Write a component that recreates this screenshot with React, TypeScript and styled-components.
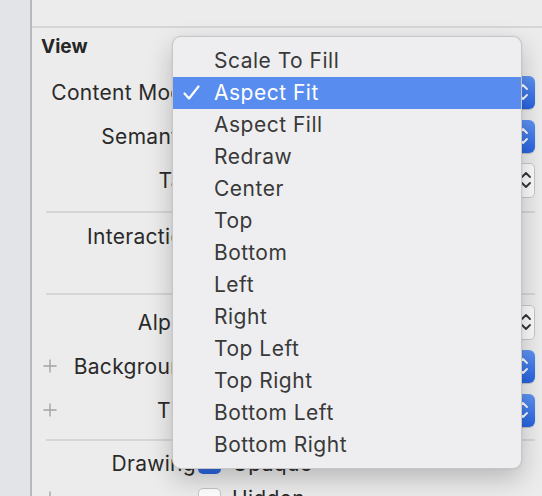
import { createGlobalStyle } from 'styled-components';
import styled from 'styled-components';

const GlobalStyle = createGlobalStyle`
  html, body {
    margin:0;
    padding:0;
    background:#ececec;
    font-family:Inter, "Noto Sans", "DejaVu Sans", sans-serif;
    -webkit-font-smoothing:antialiased;
  }
`

const Page = styled.div`
  display:flex;
  width:542px;
  height:496px;
  overflow:hidden;
  position:relative;
  background:#ececec;
`
const Sidebar = styled.div`
  width:30px;
  flex-shrink:0;
  background:#e3e4e8;
  border-right:2px solid #b9b9bb;
`
const Inspector = styled.div`
  flex:1;
  display:flex;
  flex-direction:column;
`
const TopBar = styled.div`
  height:26px;
  flex-shrink:0;
  border-bottom:2px solid #d6d6d6;
`
const Section = styled.div`
  display:flex;
  flex-direction:column;
  flex-shrink:0;
  padding:0 7px 0 9px;
`
const Title = styled.div`
  height:42px;
  flex-shrink:0;
  box-sizing:border-box;
  padding-top:8px;
  line-height:22px;
  font-size:19px;
  font-weight:700;
  color:#262626;
`
const Row = styled.div<{ $h: number }>`
  display:grid;
  grid-template-columns:155px 1fr;
  column-gap:2px;
  align-items:center;
  flex-shrink:0;
  height:${p => p.$h}px;
`
const LabelCell = styled.div`
  display:flex;
  align-items:center;
  height:100%;
`
const Label = styled.span`
  margin-left:auto;
  font-size:21px;
  letter-spacing:0.3px;
  color:#2a2a2a;
  white-space:nowrap;
`
const Divider = styled.div<{ $mt: number }>`
  height:2px;
  flex-shrink:0;
  background:#d6d6d6;
  margin:${p => p.$mt}px 0 5px 5px;
`
const PopupButton = styled.div`
  display:flex;
  align-items:center;
  height:33px;
  border-radius:6px;
  background:linear-gradient(#5f93f2, #2762df);
  box-shadow:0 1px 1px rgba(0,0,0,0.2);
  color:#fff;
  font-size:20px;
  padding:0 6px 0 10px;
`
const PopupText = styled.span`
  flex:1;
`
const Stepper = styled.div`
  display:flex;
  align-items:center;
  height:35px;
`
const Field = styled.div`
  flex:1;
  height:31px;
  margin-right:4px;
  background:#fff;
  border:1px solid #cfcfcf;
`
const StepBox = styled.div`
  width:16px;
  height:33px;
  border-radius:5px;
  background:#fbfbfb;
  border:1px solid #c8c8c8;
  display:flex;
  align-items:center;
  justify-content:center;
`
const CheckRow = styled.div`
  display:flex;
  align-items:center;
  gap:11px;
  font-size:21px;
  letter-spacing:0.3px;
  color:#2a2a2a;
`
const CheckBox = styled.div<{ $on?: boolean }>`
  width:23px;
  height:21px;
  flex-shrink:0;
  border-radius:5px;
  box-sizing:border-box;
  display:flex;
  align-items:center;
  justify-content:center;
  background:${p => p.$on ? 'linear-gradient(#5f93f2, #2762df)' : '#fff'};
  border:${p => p.$on ? 'none' : '1px solid #c6c6c6'};
`
const Plus = styled.svg`
  width:14px;
  height:14px;
  margin-left:2px;
`

const Menu = styled.div`
  position:absolute;
  left:172px;
  top:36px;
  width:350px;
  box-sizing:border-box;
  padding:8px 0 7px;
  background:#eeeef0;
  border:1px solid rgba(0,0,0,0.16);
  border-radius:9px;
  box-shadow:0 10px 26px rgba(0,0,0,0.22), 0 0 2px rgba(0,0,0,0.1);
  overflow:hidden;
`
const MenuItem = styled.div<{ $active?: boolean }>`
  position:relative;
  height:32px;
  line-height:32px;
  padding-left:41px;
  font-size:21px;
  letter-spacing:0.5px;
  color:${p => p.$active ? '#fff' : '#393939'};
  background:${p => p.$active ? '#588cee' : 'transparent'};
`
const Check = styled.svg`
  position:absolute;
  left:10px;
  top:8px;
  width:17px;
  height:16px;
`

function Arrows({ color }: { color: string }) {
  return (
    <svg width="12" height="22" viewBox="0 0 12 22">
      <polyline points="2,8 6,4 10,8" fill="none" stroke={color} strokeWidth="1.8" strokeLinecap="round" strokeLinejoin="round" />
      <polyline points="2,14 6,18 10,14" fill="none" stroke={color} strokeWidth="1.8" strokeLinecap="round" strokeLinejoin="round" />
    </svg>
  )
}

function PlusIcon() {
  return (
    <Plus viewBox="0 0 14 14">
      <path d="M7 0.5V13.5M0.5 7H13.5" stroke="#a3a3a3" strokeWidth="1.4" />
    </Plus>
  )
}

const items = ['Scale To Fill', 'Aspect Fit', 'Aspect Fill', 'Redraw', 'Center', 'Top', 'Bottom', 'Left', 'Right', 'Top Left', 'Top Right', 'Bottom Left', 'Bottom Right']

export default function App() {
  return (
    <Page>
      <GlobalStyle />
      <Sidebar />
      <Inspector>
        <TopBar />
        <Section>
          <Title>View</Title>
          <Row $h={44}>
            <LabelCell><Label>Content Mode</Label></LabelCell>
            <PopupButton><PopupText>Aspect Fit</PopupText><Arrows color="#fff" /></PopupButton>
          </Row>
          <Row $h={44}>
            <LabelCell><Label>Semantic</Label></LabelCell>
            <PopupButton><PopupText>Unspecified</PopupText><Arrows color="#fff" /></PopupButton>
          </Row>
          <Row $h={44}>
            <LabelCell><Label>Tag</Label></LabelCell>
            <Stepper><Field /><StepBox><Arrows color="#333" /></StepBox></Stepper>
          </Row>
          <Divider $mt={9} />
          <Row $h={36}>
            <LabelCell><Label>Interaction</Label></LabelCell>
            <CheckRow><CheckBox $on /> User Interaction Enabled</CheckRow>
          </Row>
          <Row $h={30}>
            <LabelCell />
            <CheckRow><CheckBox /> Multiple Touch</CheckRow>
          </Row>
          <Divider $mt={9} />
          <Row $h={44}>
            <LabelCell><Label>Alpha</Label></LabelCell>
            <Stepper><Field /><StepBox><Arrows color="#333" /></StepBox></Stepper>
          </Row>
          <Row $h={44}>
            <LabelCell><PlusIcon /><Label>Background</Label></LabelCell>
            <PopupButton><PopupText>Default</PopupText><Arrows color="#fff" /></PopupButton>
          </Row>
          <Row $h={44}>
            <LabelCell><PlusIcon /><Label>Tint</Label></LabelCell>
            <PopupButton><PopupText>Default</PopupText><Arrows color="#fff" /></PopupButton>
          </Row>
          <Divider $mt={7} />
          <Row $h={34}>
            <LabelCell><Label>Drawing</Label></LabelCell>
            <CheckRow>
              <CheckBox $on>
                <svg width="12" height="10" viewBox="0 0 12 10"><polyline points="1.5,5 4.5,8 10.5,1.5" fill="none" stroke="#fff" strokeWidth="2" /></svg>
              </CheckBox>
              Opaque
            </CheckRow>
          </Row>
          <Row $h={36}>
            <LabelCell><PlusIcon /></LabelCell>
            <CheckRow><CheckBox /> Hidden</CheckRow>
          </Row>
        </Section>
      </Inspector>
      <Menu>
        {items.map(item => (
          <MenuItem key={item} $active={item === 'Aspect Fit'}>
            {item === 'Aspect Fit' && (
              <Check viewBox="0 0 17 16">
                <polyline points="1.5,8.5 6,13.5 15.5,1.5" fill="none" stroke="#fff" strokeWidth="2.2" strokeLinecap="round" strokeLinejoin="round" />
              </Check>
            )}
            {item}
          </MenuItem>
        ))}
      </Menu>
    </Page>
  )
}
